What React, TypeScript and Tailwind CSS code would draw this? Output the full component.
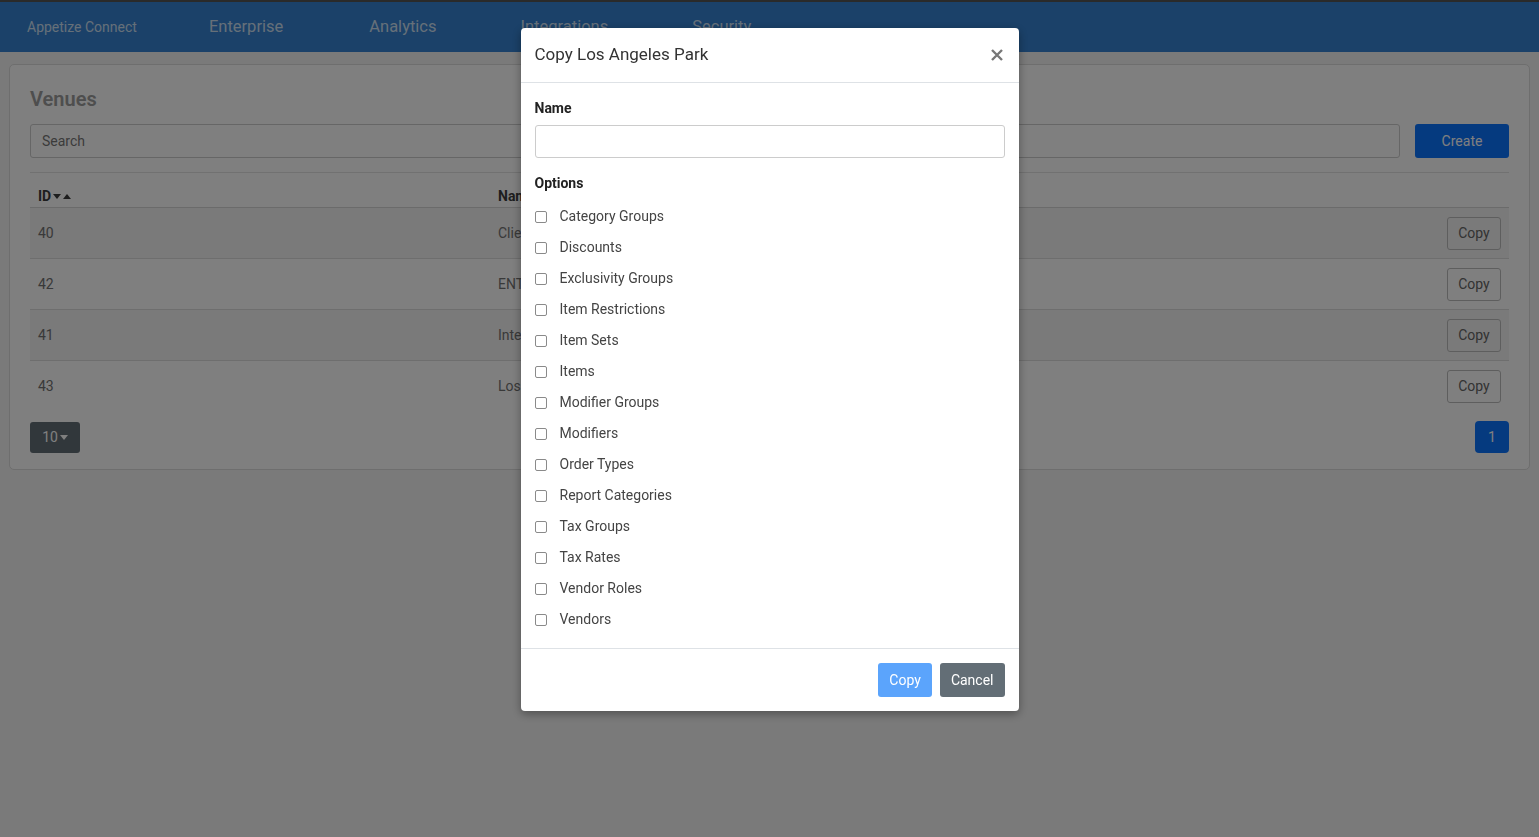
import React from "react";

interface Venue {
  id: number;
  name: string;
}

const venues: Venue[] = [
  { id: 40, name: "Client Demo Venue" },
  { id: 42, name: "ENT Test Venue" },
  { id: 41, name: "Integration Venue" },
  { id: 43, name: "Los Angeles Park" },
];

const options = [
  "Category Groups",
  "Discounts",
  "Exclusivity Groups",
  "Item Restrictions",
  "Item Sets",
  "Items",
  "Modifier Groups",
  "Modifiers",
  "Order Types",
  "Report Categories",
  "Tax Groups",
  "Tax Rates",
  "Vendor Roles",
  "Vendors",
];

function Caret({ up = false }: { up?: boolean }) {
  return (
    <svg width="8" height="5" viewBox="0 0 8 5" className="inline-block">
      {up ? <path d="M0 5 L4 0 L8 5 Z" fill="currentColor" /> : <path d="M0 0 L8 0 L4 5 Z" fill="currentColor" />}
    </svg>
  );
}

function CopyModal() {
  return (
    <div className="fixed inset-0 z-20 bg-black/50">
      <div className="mx-auto mt-[28px] w-[498px] rounded-[4px] bg-white shadow-[0_3px_10px_rgba(0,0,0,0.35)]">
        <div className="flex h-[55px] items-center justify-between border-b border-[#dee2e6] px-[14px]">
          <h5 className="text-[17px] text-[#333]">Copy Los Angeles Park</h5>
          <button className="mr-[2px] text-[#777]">
            <svg width="12" height="12" viewBox="0 0 12 12">
              <path d="M1 1 L11 11 M11 1 L1 11" stroke="currentColor" strokeWidth="2.4" />
            </svg>
          </button>
        </div>

        <div className="border-b border-[#dee2e6] px-[14px] pt-[15px] pb-[13px]">
          <label className="block text-[14px] leading-[20px] font-bold text-[#222]">Name</label>
          <input
            type="text"
            className="mt-[7px] block h-[33px] w-full rounded-[3px] border border-[#ccc] px-3 text-[14px] outline-none"
          />

          <div className="mt-[15px] text-[14px] leading-[20px] font-bold text-[#222]">Options</div>
          <div className="mt-[8px]">
            {options.map((opt) => (
              <label key={opt} className="flex h-[31px] items-center text-[14px] text-[#444]">
                <input
                  type="checkbox"
                  className="m-0 h-[12px] w-[12px] appearance-none rounded-[2px] border border-[#8a8a8a] bg-white"
                />
                <span className="ml-[13px]">{opt}</span>
              </label>
            ))}
          </div>
        </div>

        <div className="flex justify-end gap-2 px-[14px] py-[14px]">
          <button className="h-[34px] rounded-[3px] bg-[#5ba4fc] px-[11px] text-[14px] text-white">Copy</button>
          <button className="h-[34px] rounded-[3px] bg-[#636e76] px-[11px] text-[14px] text-white">Cancel</button>
        </div>
      </div>
    </div>
  );
}

export default function App() {
  return (
    <div className="relative min-h-screen bg-[#f4f4f4] font-[family-name:Roboto,sans-serif]">
      <div className="h-[2px] bg-[#555]" />
      <nav className="flex h-[50px] items-center bg-[#3683d2] pl-[27px] text-white/75">
        <span className="text-[14px]">Appetize Connect</span>
        <span className="ml-[72px] text-[16.5px]">Enterprise</span>
        <span className="ml-[86px] text-[16.5px]">Analytics</span>
        <span className="ml-[84px] text-[16.5px]">Integrations</span>
        <span className="ml-[84px] text-[16.5px]">Security</span>
      </nav>

      <div className="mx-[9px] mt-[12px] rounded-[5px] border border-[#dcdcdc] bg-white px-5 pt-5 pb-4">
        <h2 className="text-[20px] leading-[28px] font-semibold text-[#9c9c9c]">Venues</h2>

        <div className="mt-[11px] flex gap-[15px]">
          <input
            type="text"
            placeholder="Search"
            className="h-[34px] flex-1 rounded-[3px] border border-[#ccc] px-[11px] text-[14px] text-[#666] placeholder:text-[#777] outline-none"
          />
          <button className="h-[34px] w-[94px] rounded-[3px] bg-[#0b74ff] text-[14px] text-white">Create</button>
        </div>

        <div className="mt-[14px] border-t border-[#e2e2e2]">
          <div className="flex border-b border-[#d6d6d6] pt-[14px] pb-[2px] text-[14px] leading-[18px] font-bold text-[#3c3c3c]">
            <div className="flex w-[468px] items-center gap-[2px] pl-2">
              ID
              <Caret />
              <Caret up />
            </div>
            <div className="flex-1">Name</div>
          </div>

          {venues.map((v, i) => (
            <div
              key={v.id}
              className={`flex h-[51px] items-center border-b border-[#dcdcdc] text-[14px] text-[#727272] ${
                i % 2 === 0 ? "bg-[#f4f4f4]" : "bg-white"
              } ${i === venues.length - 1 ? "border-b-0" : ""}`}
            >
              <div className="w-[468px] pl-2">{v.id}</div>
              <div className="flex-1">{v.name}</div>
              <div className="pr-2">
                <button className="h-[33px] w-[54px] rounded-[3px] border border-[#bdbdbd] text-[14px] text-[#666]">
                  Copy
                </button>
              </div>
            </div>
          ))}
        </div>

        <div className="mt-[9px] flex items-center justify-between">
          <button className="flex h-[31px] w-[50px] items-center justify-center gap-[2px] rounded-[3px] bg-[#636e76] text-[14px] text-white">
            10
            <Caret />
          </button>
          <button className="h-[32px] w-[34px] rounded-[4px] bg-[#0b74ff] text-[14px] text-white">1</button>
        </div>
      </div>

      <CopyModal />
    </div>
  );
}
